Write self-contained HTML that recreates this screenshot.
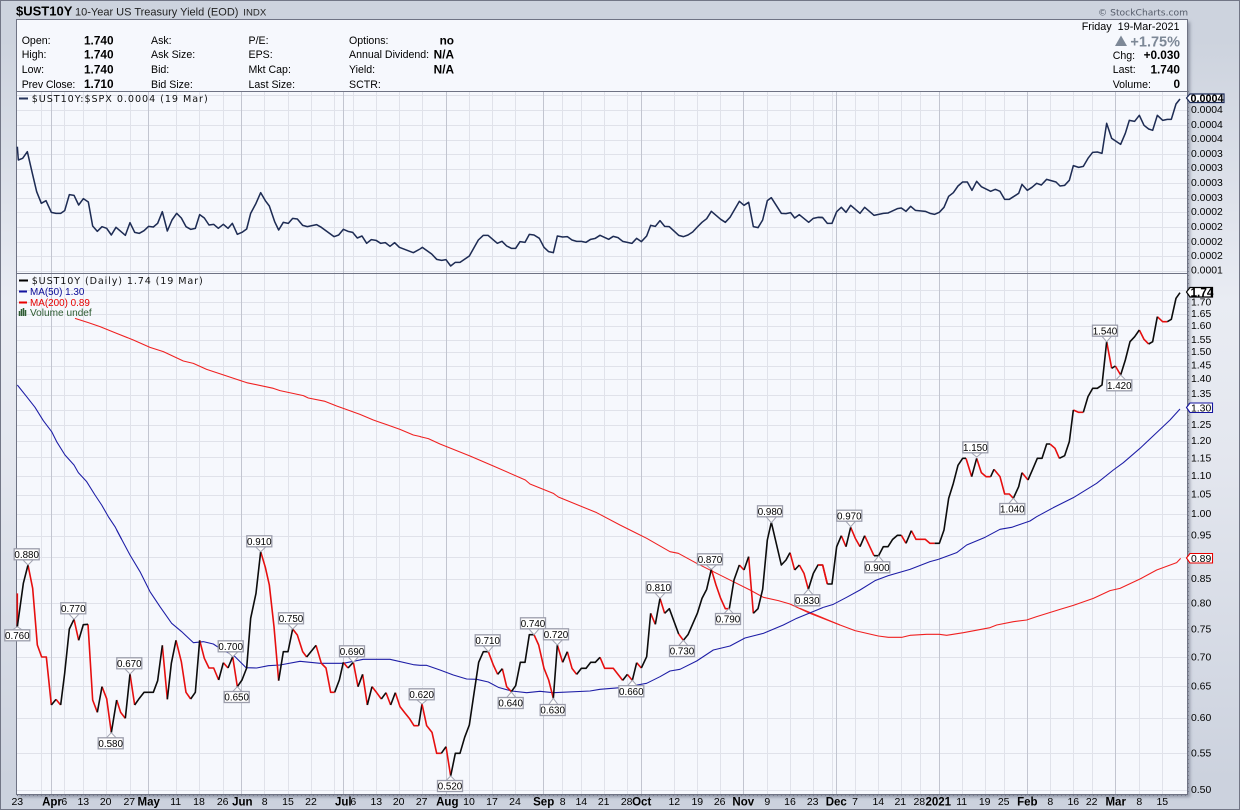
<!DOCTYPE html>
<html><head><meta charset="utf-8"><style>
html,body{margin:0;padding:0;width:1240px;height:810px;overflow:hidden;background:#cdd3de}
#bg{position:absolute;left:0;top:0;width:1238px;height:808px;border:1px solid #727686;background:linear-gradient(to bottom,#cdd3de 0,#cdd3de 40px,#e9ecf3 300px,#e4e7ef 450px,#ccd2de 780px,#ccd2de 100%)}
#ch{position:absolute;left:16px;top:19px;width:1171px;height:775px;background:#f6f8fd;box-shadow:3px 3px 3px rgba(90,95,115,.55)}
svg{position:absolute;left:0;top:0}
text{font-family:"Liberation Sans",sans-serif;fill:#000}
.i{font-size:10.6px}
.b{font-size:11.8px;font-weight:bold}
.m{font-family:"DejaVu Sans",sans-serif;font-size:9.6px;fill:#111}
.d text{font-size:10.5px;text-anchor:middle}
.d .k{font-size:11.5px;font-weight:bold}
.a text{font-size:10.4px}
.l polygon{fill:#fff;stroke:#a2a4b2;stroke-width:1}
.l rect{fill:#fff;stroke:#9b9dab;stroke-width:1.3}
.l text{font-size:9.8px;text-anchor:middle}
.t{font-size:10.8px;font-weight:bold}
</style></head><body>
<div id="bg"></div><div id="ch"></div>
<svg width="1240" height="810" viewBox="0 0 1240 810">
<!-- grid -->
<g fill="none" shape-rendering="crispEdges">
<path stroke="#e0e2ea" d="M41.5 91V794M64.5 91V794M83.5 91V794M106.5 91V794M130.5 91V794M176.5 91V794M199.5 91V794M223.5 91V794M264.5 91V794M288.5 91V794M311.5 91V794M334.5 91V794M353.5 91V794M376.5 91V794M399.5 91V794M422.5 91V794M469.5 91V794M492.5 91V794M515.5 91V794M562.5 91V794M581.5 91V794M604.5 91V794M627.5 91V794M674.5 91V794M697.5 91V794M720.5 91V794M767.5 91V794M790.5 91V794M813.5 91V794M832.5 91V794M855.5 91V794M878.5 91V794M901.5 91V794M920.5 91V794M962.5 91V794M985.5 91V794M1004.5 91V794M1050.5 91V794M1073.5 91V794M1092.5 91V794M1139.5 91V794M1162.5 91V794"/>
<path stroke="#e0e2ea" d="M17 95.5H1187M17 110.5H1187M17 125.5H1187M17 140.5H1187M17 154.5H1187M17 169.5H1187M17 183.5H1187M17 198.5H1187M17 212.5H1187M17 227.5H1187M17 242.5H1187M17 256.5H1187M17 271.5H1187M17 290.5H1187M17 302.5H1187M17 314.5H1187M17 326.5H1187M17 340.5H1187M17 352.5H1187M17 366.5H1187M17 379.5H1187M17 395.5H1187M17 410.5H1187M17 425.5H1187M17 441.5H1187M17 457.5H1187M17 476.5H1187M17 495.5H1187M17 514.5H1187M17 536.5H1187M17 557.5H1187M17 579.5H1187M17 603.5H1187M17 629.5H1187M17 657.5H1187M17 686.5H1187M17 718.5H1187M17 753.5H1187M17 790.5H1187"/>
<path stroke="#c2c5d0" d="M51.5 91V794M148.5 91V794M241.5 91V794M343.5 91V794M446.5 91V794M543.5 91V794M641.5 91V794M743.5 91V794M836.5 91V794M939.5 91V794M1027.5 91V794M1115.5 91V794"/>
<path stroke="#6f7384" d="M16.5 19.5H1187.5V794.5H16.5ZM16.5 91.5H1187.5M16.5 273.5H1187.5"/>
<path stroke="#787c8a" stroke-dasharray="1 3" d="M1188.5 91V794M17 795.5H1187"/>
</g>
<!-- upper line -->
<g fill="none" stroke="#1e2c54" stroke-width="4.6" stroke-linejoin="round">
<polyline transform="translate(0,100) scale(.33333)" points="52,140 55,180 68,175 82,155 97,220 110,275 124,310 138,302 154,337 168,340 182,340 194,332 208,284 222,286 236,315 250,296 265,306 278,378 292,394 306,380 320,385 334,405 348,382 362,394 376,406 390,368 404,397 418,400 432,392 446,379 460,381 473,370 487,335 502,393 516,360 530,340 544,354 558,380 572,388 586,385 599,344 613,354 627,375 641,373 655,385 670,373 684,385 697,370 712,403 726,397 740,387 752,340 768,310 782,278 796,302 808,318 824,365 836,390 850,367 865,370 878,355 892,357 908,376 922,380 950,374 964,382 1002,410 1016,405 1030,388 1044,394 1058,397 1072,414 1086,408 1100,430 1114,419 1128,421 1142,430 1156,428 1170,439 1184,428 1198,442 1240,458 1260,447"/>
<polyline transform="translate(420,100) scale(.33333)" points="0,447 7,442 35,462 50,478 65,481 78,479 92,498 106,487 120,487 148,468 175,420 190,406 204,406 232,430 246,424 260,438 274,445 287,445 300,425 315,427 328,403 342,405 358,415 372,442 386,455 400,458 412,408 428,411 442,410 456,420 470,424 484,424 498,427 512,418 526,415 540,406 566,418 580,409 594,413 608,424 636,430 650,415 664,425 680,408 692,376 706,379 720,362 734,379 748,380 776,406 790,410 804,405 818,396 832,381 846,367 860,356 874,334 888,346 902,358 916,367 930,352 958,304 972,316 986,307 1000,380 1014,383 1028,360 1042,302 1054,293 1084,340 1098,341 1112,338 1124,354 1138,344 1166,367 1180,355 1194,352 1208,352"/>
<polyline transform="translate(820,90) scale(.33333)" points="-6,382 8,383 22,400 36,400 50,365 64,352 78,367 92,346 106,358 120,370 134,352 162,376 190,370 204,369 232,356 244,354 258,364 272,349 286,361 316,364 330,370 344,373 358,367 372,352 386,319 400,308 414,288 428,276 442,276 456,301 470,274 484,290 512,304 526,298 540,304 554,328 568,328 596,310 606,283 622,301 636,292 650,280 664,285 680,268 708,276 720,288 734,286 748,271 760,227 776,232 790,229 804,205 818,187 832,186 846,190 860,100 875,145 902,163 916,130 928,91 944,94 958,76 972,106 986,117 998,121 1012,76 1028,91 1042,88 1054,88 1068,42 1080,27"/>
</g>
<!-- MA200 -->
<g fill="none" stroke="#f02020" stroke-width="3.2" stroke-linejoin="round">
<polyline transform="translate(0,300) scale(.33333)" points="225,55 265,68 300,80 350,100 400,120 450,142 490,155 550,183 580,190 620,208 680,228 740,248 820,265 840,272 910,287 925,294 975,304 1010,318 1030,325 1080,343 1120,360 1160,374 1200,388 1240,405 1262,410"/>
<polyline transform="translate(420,400) scale(.33333)" points="0,110 25,116 60,132 150,168 220,198 316,240 330,252 400,280 415,291 530,338 600,375 680,415 750,455 775,460 830,490 880,515 940,545 990,570 1030,592 1075,602 1110,612 1170,640 1260,675"/>
<polyline transform="translate(820,560) scale(.33333)" points="-60,145 0,170 60,195 105,212 175,228 205,232 245,232 270,226 320,223 358,223 380,226 430,218 510,203 530,195 580,185 620,180 650,170 720,148 760,136 820,115 870,92 900,85 960,57 1010,30 1070,8 1082,-5"/>
</g>
<!-- MA50 -->
<g fill="none" stroke="#1d1da6" stroke-width="3.2" stroke-linejoin="round">
<polyline transform="translate(0,300) scale(.33333)" points="52,255 80,290 105,322 130,362 155,395 170,425 195,465 222,495 235,518 260,545 285,585 305,615 325,650 345,680 365,718"/>
<polyline transform="translate(0,530) scale(.33333)" points="350,0 390,75 420,125 450,185 480,230 515,280 545,305 580,338 610,335 640,342 670,362 700,375 738,413 770,414 805,407 840,405 900,394 960,400 1030,400 1090,388 1170,388 1240,404 1260,406"/>
<polyline transform="translate(420,530) scale(.33333)" points="0,406 20,406 60,420 100,435 140,447 170,448 205,456 235,472 275,483 320,488 360,484 400,488 510,483 540,478 600,473 640,467 680,460 720,440 750,423 780,418 830,393 880,360 930,348 975,324 1030,310 1090,285 1130,265 1210,232"/>
<polyline transform="translate(820,560) scale(.33333)" points="10,142 40,133 80,112 120,90 165,62 205,47 270,28 330,5 355,-2"/>
<polyline transform="translate(820,280) scale(.33333)" points="355,838 410,818 440,795 495,772 540,748 575,742 630,723 650,710 700,683 760,653 830,610 880,570 910,548 960,505 1010,458 1050,420 1080,387"/>
</g>
<!-- price -->
<g fill="none" stroke-width="4.8" stroke-linejoin="round">
<g transform="translate(0,530) scale(.33333)">
<path stroke="#e60f0f" d="M52 190L52 290M84 105L98 175L112 345L125 381L139 381L154 525M168 508L182 525M222 268L236 331M264 283L278 510L292 547M306 470L320 506L334 608M350 510L362 547L376 565M390 432L404 525M487 346L502 508M528 331L544 395L558 487L572 507M599 331L613 385L627 414L641 414L656 450M670 398L684 414M698 380L712 470M782 65L796 112L808 165L822 290L836 452M878 297L892 315L908 365L920 381M948 346L964 400L978 414L992 487L1004 487M1030 397L1044 414M1060 397L1074 470M1088 433L1102 525M1116 470L1130 488L1144 507M1158 488L1172 525M1186 488L1200 530L1214 548L1228 565L1242 587L1256 587"/>
<path stroke="#0c0c0c" d="M52 290L70 160L84 105M154 525L168 508M182 525L194 430L208 297L222 268M236 331L250 284L264 283M292 547L306 470M334 608L350 510M376 565L390 432M404 525L418 505L432 487L460 487L473 452L487 346M502 508L514 400L528 331M572 507L586 487L599 331M656 450L670 398M684 414L698 380M712 470L726 450L740 414L752 265L768 190L782 65M836 452L850 365L864 365L878 297M920 381L948 346M1004 487L1018 450L1030 397M1044 414L1060 397M1074 470L1088 433M1102 525L1116 470M1144 507L1158 488M1172 525L1186 488M1256 587L1266 522"/>
</g>
<g transform="translate(420,530) scale(.33333)">
<path stroke="#e60f0f" d="M6 522L20 587L36 607L50 670L64 670M78 650L92 738M205 365L220 405L233 433M247 416L260 470L274 485M342 314L356 345L372 415L386 450L400 505M412 345L428 397M442 365L456 415L470 433M540 382L554 415L580 415L608 451M622 433L637 451M650 398L664 414M692 250L706 283M720 205L734 250M776 312L790 331M874 118L888 165L902 205L916 236L928 236M958 105L972 120M986 80L1000 250M1110 68L1124 120M1138 105L1152 130L1165 178M1208 105L1222 162"/>
<path stroke="#0c0c0c" d="M64 670L78 650M92 738L106 670L120 670L134 622L148 585L162 490L176 397L190 365L205 365M233 433L247 416M274 485L287 467L301 397L315 397L328 314L342 314M400 505L412 345M428 397L442 365M470 433L484 415L498 415L512 397L526 397L540 382M608 451L622 433M637 451L650 398M664 414L680 380L692 250M706 283L720 205M734 250L748 236L776 312M790 331L804 314L832 250L846 205L860 178L874 118M928 236L942 150L958 105M972 120L986 80M1000 250L1014 236L1028 178L1042 30L1054 -23L1084 105L1098 90L1110 68M1124 120L1138 105M1165 178L1180 130L1194 105L1208 105"/>
</g>
<g transform="translate(820,280) scale(.33333)">
<path stroke="#e60f0f" d="M-6 855L8 855L22 912M78 800L64 767M92 742L106 775L120 800M134 767L162 827M244 766L258 790M274 752L288 778L316 778L330 790L344 790M438 535L455 590M470 535L484 578L498 590L512 590M522 568L540 590L554 642L568 642L580 655M606 578L624 600M690 492L705 505L718 535M760 390L776 397L790 397M860 185L875 265M886 258L902 285M958 150L972 178L986 192M1012 110L1028 125L1042 125"/>
<path stroke="#0c0c0c" d="M22 912L36 912L50 800L64 767M78 800L92 742M120 800L134 767M162 827L176 827L190 800L204 800L218 778L232 766L244 766M258 790L274 752M344 790L358 790L372 750L386 655L400 610L414 556L428 535L438 535M455 590L470 535M512 590L522 568M580 655L596 620L606 578M624 600L638 568L652 535L666 535L680 492L690 492M718 535L734 527L748 485L760 390M790 397L804 350L818 325L832 325L846 315L860 185M875 265L886 258M902 285L916 240L930 185L944 170L958 150M986 192L998 185L1012 110M1042 125L1054 118L1068 55L1080 38"/>
</g>
</g>
<!-- peak labels -->
<g class="l">
<polygon points="23,560 28,565 33,560"/><rect x="14.2" y="548.8" width="25" height="11"/><text x="26.7" y="558">0.880</text>
<polygon points="12.3,630 17.3,626.7 22.3,630"/><rect x="4.8" y="629.8" width="25" height="11"/><text x="17.3" y="639">0.760</text>
<polygon points="69,614 74,619.3 79,614"/><rect x="60.8" y="602.8" width="25" height="11"/><text x="73.3" y="612">0.770</text>
<polygon points="125,669 130,674 135,669"/><rect x="116.8" y="657.8" width="25" height="11"/><text x="129.3" y="667">0.670</text>
<polygon points="106.3,738 111.3,732.7 116.3,738"/><rect x="98.2" y="737.8" width="25" height="11"/><text x="110.7" y="747">0.580</text>
<polygon points="255.7,547 260.7,551.7 265.7,547"/><rect x="246.8" y="535.8" width="25" height="11"/><text x="259.3" y="545">0.910</text>
<polygon points="287.7,624 292.7,629 297.7,624"/><rect x="278.5" y="612.8" width="25" height="11"/><text x="291" y="622">0.750</text>
<polygon points="227.7,652 232.7,656.7 237.7,652"/><rect x="218.2" y="640.8" width="25" height="11"/><text x="230.7" y="650">0.700</text>
<polygon points="232.3,692 237.3,686.7 242.3,692"/><rect x="224.2" y="691.5" width="25" height="11"/><text x="236.7" y="700.7">0.650</text>
<polygon points="348.3,657 353.3,662.3 358.3,657"/><rect x="339.5" y="645.8" width="25" height="11"/><text x="352" y="655">0.690</text>
<polygon points="417,700 422,704 427,700"/><rect x="409.2" y="688.8" width="25" height="11"/><text x="421.7" y="698">0.620</text>
<polygon points="445.7,781 450.7,776 455.7,781"/><rect x="437.5" y="780.5" width="25" height="11"/><text x="450" y="789.7">0.520</text>
<polygon points="483.3,646 488.3,651.7 493.3,646"/><rect x="475.2" y="634.8" width="25" height="11"/><text x="487.7" y="644">0.710</text>
<polygon points="506.3,698 511.3,692 516.3,698"/><rect x="498.2" y="697.5" width="25" height="11"/><text x="510.7" y="706.7">0.640</text>
<polygon points="529,629 534,634.7 539,629"/><rect x="520.5" y="617.8" width="25" height="11"/><text x="533" y="627">0.740</text>
<polygon points="552.3,640 557.3,645 562.3,640"/><rect x="543.5" y="628.8" width="25" height="11"/><text x="556" y="638">0.720</text>
<polygon points="548.3,705 553.3,698.3 558.3,705"/><rect x="540.2" y="704.5" width="25" height="11"/><text x="552.7" y="713.7">0.630</text>
<polygon points="627.3,686 632.3,680.3 637.3,686"/><rect x="618.8" y="685.8" width="25" height="11"/><text x="631.3" y="695">0.660</text>
<polygon points="655,593 660,598.3 665,593"/><rect x="646.2" y="581.8" width="25" height="11"/><text x="658.7" y="591">0.810</text>
<polygon points="678.3,646 683.3,640.3 688.3,646"/><rect x="669.5" y="645.5" width="25" height="11"/><text x="682" y="654.7">0.730</text>
<polygon points="706.3,565 711.3,569.3 716.3,565"/><rect x="697.5" y="553.8" width="25" height="11"/><text x="710" y="563">0.870</text>
<polygon points="723.7,614 728.7,608.7 733.7,614"/><rect x="715.5" y="613.5" width="25" height="11"/><text x="728" y="622.7">0.790</text>
<polygon points="766.3,517 771.3,522.7 776.3,517"/><rect x="757.5" y="505.8" width="25" height="11"/><text x="770" y="515">0.980</text>
<polygon points="803.3,595 808.3,589.3 813.3,595"/><rect x="794.8" y="594.8" width="25" height="11"/><text x="807.3" y="604">0.830</text>
<polygon points="845.7,521 850.7,526.7 855.7,521"/><rect x="836.8" y="510.2" width="25" height="11"/><text x="849.3" y="519.4">0.970</text>
<polygon points="873.7,562 878.7,556 883.7,562"/><rect x="864.8" y="561.8" width="25" height="11"/><text x="877.3" y="571">0.900</text>
<polygon points="971.7,453 976.7,457 981.7,453"/><rect x="962.8" y="441.8" width="25" height="11"/><text x="975.3" y="451">1.150</text>
<polygon points="1008.3,504 1013.3,498.3 1018.3,504"/><rect x="999.8" y="503.5" width="25" height="11"/><text x="1012.3" y="512.7">1.040</text>
<polygon points="1101.7,336 1106.7,341.7 1111.7,336"/><rect x="1092.5" y="325.2" width="25" height="11"/><text x="1105" y="334.4">1.540</text>
<polygon points="1115.7,380 1120.7,375 1125.7,380"/><rect x="1106.8" y="379.8" width="25" height="11"/><text x="1119.3" y="389">1.420</text>
</g>
<!-- header -->
<text x="16" y="15.5" style="font-size:13px;font-weight:bold">$UST10Y</text>
<text x="75" y="15.5" style="font-size:11px;fill:#222">10-Year US Treasury Yield (EOD)</text>
<text x="243.3" y="15.5" style="font-size:9.6px;fill:#222">INDX</text>
<text x="1098" y="15.5" style="font-family:'DejaVu Sans',sans-serif;font-size:9.2px;fill:#555c6a">© StockCharts.com</text>
<g class="i">
<text x="21.7" y="44">Open:</text><text x="21.7" y="58">High:</text><text x="21.7" y="73">Low:</text><text x="21.7" y="88" textLength="53.6">Prev Close:</text>
<text x="151" y="44">Ask:</text><text x="151" y="58">Ask Size:</text><text x="151" y="73">Bid:</text><text x="151" y="88">Bid Size:</text>
<text x="248.5" y="44">P/E:</text><text x="248.5" y="58">EPS:</text><text x="248.5" y="73">Mkt Cap:</text><text x="248.5" y="88">Last Size:</text>
<text x="349" y="44">Options:</text><text x="349" y="58">Annual Dividend:</text><text x="349" y="73">Yield:</text><text x="349" y="88">SCTR:</text>
</g>
<g class="b">
<text x="84" y="44.5">1.740</text><text x="84" y="58.5">1.740</text><text x="84" y="73.5">1.740</text><text x="84" y="88">1.710</text>
<text x="454" y="44.5" text-anchor="end">no</text><text x="454" y="58.5" text-anchor="end">N/A</text><text x="454" y="73.5" text-anchor="end">N/A</text>
</g>
<text x="1179.5" y="30" text-anchor="end" style="font-size:10.8px;white-space:pre" xml:space="preserve">Friday  19-Mar-2021</text>
<polygon points="1115,46 1121,35.5 1127,46" fill="#7d8897"/>
<text x="1180" y="46.3" text-anchor="end" style="font-size:14.5px;font-weight:bold;fill:#7d8897">+1.75%</text>
<g class="i"><text x="1112.7" y="59">Chg:</text><text x="1112.7" y="73">Last:</text><text x="1112.7" y="88">Volume:</text></g>
<g class="b" text-anchor="end"><text x="1180" y="59">+0.030</text><text x="1180" y="73.5">1.740</text><text x="1180" y="88">0</text></g>
<!-- legends -->
<rect x="19" y="97.5" width="9" height="2" fill="#26345c"/>
<text class="m" x="31.7" y="102" textLength="176">$UST10Y:$SPX 0.0004 (19 Mar)</text>
<rect x="19" y="279.5" width="9" height="2" fill="#000"/>
<text class="m" x="31.7" y="284" textLength="171">$UST10Y (Daily) 1.74 (19 Mar)</text>
<rect x="19" y="290.5" width="8" height="2" fill="#1414a0"/>
<text x="30" y="295" style="font-size:9.9px;fill:#0a0a96">MA(50) 1.30</text>
<rect x="19" y="301.5" width="8" height="2" fill="#e80000"/>
<text x="30" y="306" style="font-size:9.9px;fill:#e80000">MA(200) 0.89</text>
<path d="M19.5 316v-5M21.5 316v-7M23.5 316v-8M25.5 316v-6" stroke="#2e5c32" stroke-width="1.5" fill="none"/>
<text x="30" y="316" style="font-size:10.1px;fill:#2e5c32">Volume undef</text>
<!-- right axis upper -->
<g class="a">
<text x="1191" y="113">0.0004</text><text x="1191" y="128">0.0004</text><text x="1191" y="142">0.0004</text><text x="1191" y="157">0.0003</text><text x="1191" y="171">0.0003</text><text x="1191" y="186">0.0003</text><text x="1191" y="201">0.0003</text><text x="1191" y="215">0.0002</text><text x="1191" y="230">0.0002</text><text x="1191" y="245">0.0002</text><text x="1191" y="259">0.0002</text><text x="1191" y="273.4">0.0001</text>
<text x="1191" y="305.5">1.70</text><text x="1191" y="317">1.65</text><text x="1191" y="329">1.60</text><text x="1191" y="343">1.55</text><text x="1191" y="355">1.50</text><text x="1191" y="368.5">1.45</text><text x="1191" y="382">1.40</text><text x="1191" y="397">1.35</text><text x="1191" y="428">1.25</text><text x="1191" y="444">1.20</text><text x="1191" y="461.5">1.15</text><text x="1191" y="479">1.10</text><text x="1191" y="497.5">1.05</text><text x="1191" y="517">1.00</text><text x="1191" y="538.5">0.95</text><text x="1191" y="582">0.85</text><text x="1191" y="606.5">0.80</text><text x="1191" y="632.5">0.75</text><text x="1191" y="660.5">0.70</text><text x="1191" y="689.5">0.65</text><text x="1191" y="721">0.60</text><text x="1191" y="756.5">0.55</text><text x="1191" y="793">0.50</text>
</g>
<!-- value tags -->
<polygon points="1186.5,98 1190,94 1224,94 1224,102.5 1190,102.5" fill="#fff" stroke="#1b2a58" stroke-width="1.2"/>
<text class="t" x="1190.5" y="102">0.0004</text>
<polygon points="1186.5,292 1190,287.5 1212.5,287.5 1212.5,297 1190,297" fill="#fff" stroke="#000" stroke-width="1.2"/>
<text class="t" x="1190.5" y="296.3" style="font-size:11.8px">1.74</text>
<polygon points="1186.5,407.5 1190,403 1212.5,403 1212.5,412.5 1190,412.5" fill="#fff" stroke="#1414a0" stroke-width="1.1"/>
<text x="1191" y="411.7" style="font-size:10.4px">1.30</text>
<polygon points="1186.5,558 1190,553.5 1212.5,553.5 1212.5,563 1190,563" fill="#fff" stroke="#e80000" stroke-width="1.1"/>
<text x="1191" y="562" style="font-size:10.4px">0.89</text>
<!-- dates -->
<g class="d">
<text x="17.3" y="805">23</text><text x="52" y="805.5" class="k">Apr</text><text x="64.3" y="805">6</text><text x="83.3" y="805">13</text><text x="105.7" y="805">20</text><text x="129.3" y="805">27</text><text x="148.7" y="805.5" class="k">May</text><text x="175.7" y="805">11</text><text x="199" y="805">18</text><text x="222.7" y="805">26</text><text x="242.3" y="805.5" class="k">Jun</text><text x="264.7" y="805">8</text><text x="288" y="805">15</text><text x="311" y="805">22</text><text x="343.3" y="805.5" class="k">Jul</text><text x="353.3" y="805">6</text><text x="376.3" y="805">13</text><text x="398.7" y="805">20</text><text x="421.7" y="805">27</text><text x="447.3" y="805.5" class="k">Aug</text><text x="469" y="805">10</text><text x="492" y="805">17</text><text x="515" y="805">24</text><text x="543.7" y="805.5" class="k">Sep</text><text x="562.7" y="805">8</text><text x="581.3" y="805">14</text><text x="603.7" y="805">21</text><text x="626.7" y="805">28</text><text x="641.7" y="805.5" class="k">Oct</text><text x="674.3" y="805">12</text><text x="697.3" y="805">19</text><text x="719.7" y="805">26</text><text x="743.3" y="805.5" class="k">Nov</text><text x="767.3" y="805">9</text><text x="790" y="805">16</text><text x="812.7" y="805">23</text><text x="836.3" y="805.5" class="k">Dec</text><text x="855" y="805">7</text><text x="878.3" y="805">14</text><text x="900.3" y="805">21</text><text x="919.3" y="805">28</text><text x="938.3" y="805.5" class="k">2021</text><text x="961.7" y="805">11</text><text x="984.7" y="805">19</text><text x="1003.7" y="805">25</text><text x="1027.3" y="805.5" class="k">Feb</text><text x="1050.3" y="805">8</text><text x="1073.3" y="805">16</text><text x="1091.7" y="805">22</text><text x="1115.7" y="805.5" class="k">Mar</text><text x="1139.3" y="805">8</text><text x="1162.3" y="805">15</text>
</g>
</svg>
</body></html>
